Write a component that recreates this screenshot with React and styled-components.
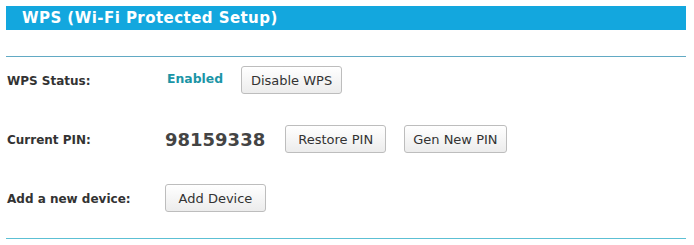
import React from "react";
import styled, { createGlobalStyle } from "styled-components";

const Global = createGlobalStyle`
  html, body { margin: 0; padding: 0; background: #ffffff; }
  body { font-family: "DejaVu Sans", Verdana, sans-serif; }
`;

const Panel = styled.div`
  margin: 6px 8px 0 6px;
  width: 680px;
`;

const TitleBar = styled.div`
  height: 24px;
  background: #13a7de;
  color: #ffffff;
  font-weight: bold;
  font-size: 15px;
  line-height: 24px;
  padding-left: 16px;
  letter-spacing: 0.45px;
`;

const Rule = styled.div`
  height: 1px;
  background: ${(p) => p.$color};
  margin-top: ${(p) => p.$top}px;
`;

const Rows = styled.div`
  display: flex;
  flex-direction: column;
  gap: 31px;
  margin-top: 9px;
`;

const Row = styled.div`
  display: flex;
  align-items: center;
  height: 28px;
`;

const Label = styled.div`
  width: 159px;
  font-size: 12px;
  font-weight: bold;
  color: #333333;
  padding-top: 2px;
  padding-left: 1px;
  box-sizing: border-box;
`;

const Status = styled.span`
  font-size: 12.4px;
  font-weight: bold;
  color: #1b95a6;
  margin-left: 2px;
  margin-right: 18px;
  margin-top: -3px;
`;

const Pin = styled.span`
  font-size: 18px;
  font-weight: bold;
  color: #444444;
  margin-right: 20px;
`;

const Button = styled.button`
  height: 28px;
  min-width: 101px;
  box-sizing: border-box;
  padding: 0 8px;
  margin-right: ${(p) => p.$gap || 0}px;
  border: 1px solid #bdbdbd;
  border-radius: 3px;
  background: linear-gradient(#ffffff, #ececec);
  color: #333333;
  font-family: "DejaVu Sans", Verdana, sans-serif;
  font-size: 13px;
  cursor: pointer;
`;

export default function App() {
  return (
    <>
      <Global />
      <Panel>
        <TitleBar>WPS (Wi-Fi Protected Setup)</TitleBar>
        <Rule $color="#62aac4" $top={26} />
        <Rows>
          <Row>
            <Label>WPS Status:</Label>
            <Status>Enabled</Status>
            <Button>Disable WPS</Button>
          </Row>
          <Row>
            <Label>Current PIN:</Label>
            <Pin>98159338</Pin>
            <Button $gap={18}>Restore PIN</Button>
            <Button>Gen New PIN</Button>
          </Row>
          <Row>
            <Label>Add a new device:</Label>
            <Button>Add Device</Button>
          </Row>
        </Rows>
        <Rule $color="#5cc0d4" $top={26} />
      </Panel>
    </>
  );
}
